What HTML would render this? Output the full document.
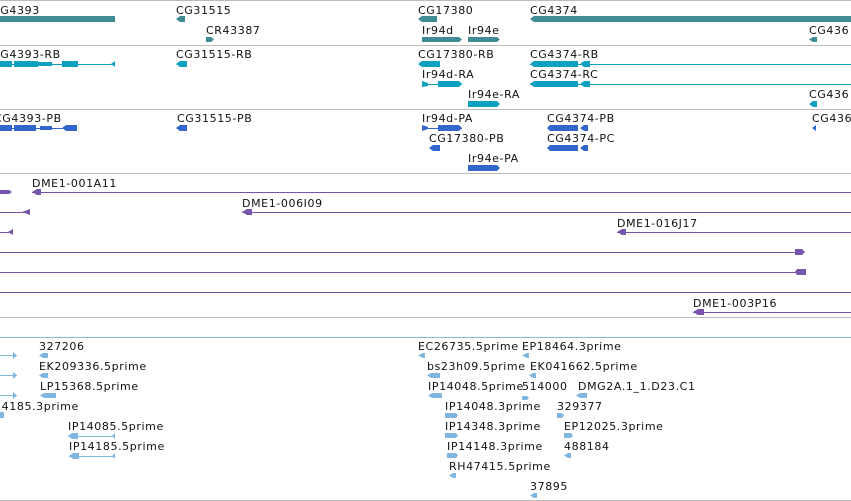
<!DOCTYPE html>
<html><head><meta charset="utf-8"><style>
html,body{margin:0;padding:0;background:#fff;width:851px;height:501px;overflow:hidden}
svg{display:block}
text{font-family:"DejaVu Sans","Liberation Sans",sans-serif;font-size:11px;letter-spacing:0.6px;fill:#111}
</style></head><body>
<svg width="851" height="501" viewBox="0 0 851 501" shape-rendering="crispEdges">
<g stroke="#bbb" stroke-width="1">
<line x1="0" y1="0.5" x2="851" y2="0.5"/>
<line x1="0" y1="45.5" x2="851" y2="45.5"/>
<line x1="0" y1="109.5" x2="851" y2="109.5"/>
<line x1="0" y1="173.5" x2="851" y2="173.5"/>
<line x1="0" y1="317.5" x2="851" y2="317.5"/>
<line x1="0" y1="500.5" x2="851" y2="500.5"/>
</g>
<line x1="0" y1="337.5" x2="851" y2="337.5" stroke="#88bbdd"/>

<g fill="#418c93" shape-rendering="auto">
<rect x="0" y="16" width="115" height="6"/>
<polygon points="176,19 180,16 185,16 185,22 180,22"/>
<polygon points="206,37 211,37 214,39.5 211,42 206,42"/>
<polygon points="418,19 422,16 437,16 437,22 422,22"/>
<polygon points="422,37 459,37 462,39.5 459,42 422,42"/>
<polygon points="468,37 497,37 500,39.5 497,42 468,42"/>
<polygon points="530,19 534,16 851,16 851,22 534,22"/>
<polygon points="809,39.5 813,37 817,37 817,42 813,42"/>
</g>
<text x="-8" y="14">CG4393</text>
<text x="176" y="14">CG31515</text>
<text x="206" y="34">CR43387</text>
<text x="418" y="14">CG17380</text>
<text x="422" y="34">Ir94d</text>
<text x="468" y="34">Ir94e</text>
<text x="530" y="14">CG4374</text>
<text x="809" y="34">CG436</text>

<g fill="#0fa0c0" shape-rendering="auto">
<rect x="0" y="64" width="115" height="1"/>
<rect x="0" y="61" width="12" height="6"/><rect x="14" y="61" width="24" height="6"/>
<rect x="38" y="62" width="14" height="4"/><rect x="62" y="61" width="16" height="6"/>
<polygon points="111,64 115,61 115,67"/>
<polygon points="176,64 180,61 187,61 187,67 180,67"/>
<polygon points="418,64 422,61 440,61 440,67 422,67"/>
<polygon points="530,64 534,61 578,61 578,67 534,67"/><polygon points="580,64 584,61 590,61 590,67 584,67"/>
<rect x="530" y="64" width="321" height="1"/>
<rect x="422" y="84" width="40" height="1"/>
<polygon points="422,81 428,83 428,86 422,87"/><polygon points="438,81 459,81 462,84 459,87 438,87"/>
<polygon points="530,84 534,81 578,81 578,87 534,87"/><polygon points="580,84 584,81 590,81 590,87 584,87"/>
<rect x="530" y="84" width="321" height="1"/>
<polygon points="468,101 497,101 500,104 497,107 468,107"/>
<polygon points="809,104 813,101 817,101 817,107 813,107"/>
</g>
<text x="-8" y="58">CG4393-RB</text>
<text x="176" y="58">CG31515-RB</text>
<text x="418" y="58">CG17380-RB</text>
<text x="530" y="58">CG4374-RB</text>
<text x="422" y="78">Ir94d-RA</text>
<text x="530" y="78">CG4374-RC</text>
<text x="468" y="98">Ir94e-RA</text>
<text x="809" y="98">CG436</text>

<g fill="#3366cc" shape-rendering="auto">
<rect x="0" y="128" width="77" height="1"/>
<rect x="0" y="125" width="12" height="6"/><rect x="14" y="125" width="22" height="6"/>
<rect x="40" y="126" width="12" height="4"/><polygon points="62,128 66,125 77,125 77,131 66,131"/>
<polygon points="176,128 180,125 187,125 187,131 180,131"/>
<rect x="422" y="128" width="40" height="1"/>
<polygon points="422,125 428,127 428,129 422,131"/><polygon points="438,125 459,125 462,128 459,131 438,131"/>
<polygon points="547,128 550,125 578,125 578,131 550,131"/><polygon points="580,128 584,125 588,125 588,131 584,131"/>
<polygon points="812,128 816,125 816,131"/>
<polygon points="429,148 433,145 440,145 440,151 433,151"/>
<polygon points="547,148 550,145 578,145 578,151 550,151"/><polygon points="580,148 584,145 588,145 588,151 584,151"/>
<polygon points="468,165 497,165 500,168 497,171 468,171"/>
</g>
<text x="-6" y="122">CG4393-PB</text>
<text x="177" y="122">CG31515-PB</text>
<text x="422" y="122">Ir94d-PA</text>
<text x="547" y="122">CG4374-PB</text>
<text x="812" y="122">CG436</text>
<text x="429" y="142">CG17380-PB</text>
<text x="547" y="142">CG4374-PC</text>
<text x="468" y="162">Ir94e-PA</text>

<g fill="#7755aa" shape-rendering="auto">
<polygon points="0,190 9,190 12,192 9,194 0,194"/>
<rect x="32" y="192" width="819" height="1"/><polygon points="32,192 37,189 41,189 41,195 37,195"/>
<rect x="0" y="212" width="30" height="1"/><polygon points="22,212 30,209 30,215"/>
<rect x="242" y="212" width="609" height="1"/><polygon points="242,212 247,209 252,209 252,215 247,215"/>
<rect x="0" y="232" width="13" height="1"/><polygon points="8,232 13,229 13,235"/>
<rect x="617" y="232" width="234" height="1"/><polygon points="617,232 622,229 626,229 626,235 622,235"/>
<rect x="0" y="252" width="800" height="1"/><polygon points="795,249 802,249 805,252 802,255 795,255"/>
<rect x="0" y="272" width="800" height="1"/><polygon points="797,269 806,269 806,275 797,275 795,272"/>
<rect x="0" y="292" width="851" height="1"/>
<rect x="693" y="312" width="158" height="1"/><polygon points="693,312 698,309 704,309 704,315 698,315"/>
</g>
<text x="32" y="187">DME1-001A11</text>
<text x="242" y="207">DME1-006I09</text>
<text x="617" y="227">DME1-016J17</text>
<text x="693" y="307">DME1-003P16</text>

<g fill="#7fb6e0" shape-rendering="auto">
<rect x="0" y="355" width="17" height="1"/><polygon points="13,352 17,355.5 13,359"/>
<rect x="0" y="375" width="17" height="1"/><polygon points="13,372 17,375.5 13,379"/>
<rect x="0" y="395" width="17" height="1"/><polygon points="13,392 17,395.5 13,399"/>
<polygon points="0,412 4,412 4,418 0,418"/>
<polygon points="39,355.5 43,353 48,353 48,358 43,358"/>
<polygon points="39,375.5 43,373 48,373 48,378 43,378"/>
<polygon points="40,395.5 44,393 56,393 56,398 44,398"/>
<rect x="68" y="436" width="47" height="1"/><polygon points="68,436 72,433 78,433 78,439 72,439"/><polygon points="115,433 115,439 112,436"/>
<rect x="69" y="456" width="46" height="1"/><polygon points="69,456 73,453 79,453 79,459 73,459"/><polygon points="115,453 115,459 112,456"/>
<polygon points="418,355.5 423,353 425,353 425,358 423,358"/>
<polygon points="522,355.5 527,353 529,353 529,358 527,358"/>
<polygon points="427,375.5 431,373 440,373 440,378 431,378"/>
<polygon points="529,375.5 533,373 536,373 536,378 533,378"/>
<polygon points="428,395.5 432,393 442,393 442,398 432,398"/>
<polygon points="522,396 527,396 529,398 527,400 522,400"/>
<polygon points="576,395.5 580,393 587,393 587,398 580,398"/>
<polygon points="445,413 456,413 458,415.5 456,418 445,418"/>
<polygon points="557,413 562,413 564,415.5 562,418 557,418"/>
<polygon points="445,433 456,433 458,435.5 456,438 445,438"/>
<polygon points="564,433 571,433 573,435.5 571,438 564,438"/>
<polygon points="447,453 456,453 458,455.5 456,458 447,458"/>
<polygon points="564,455.5 568,453 571,453 571,458 568,458"/>
<polygon points="449,475.5 453,473 456,473 456,478 453,478"/>
<polygon points="530,495.5 534,493 537,493 537,498 534,498"/>
</g>
<text x="39" y="350">327206</text>
<text x="39" y="370">EK209336.5prime</text>
<text x="40" y="390">LP15368.5prime</text>
<text x="-17" y="410">IP14185.3prime</text>
<text x="68" y="430">IP14085.5prime</text>
<text x="69" y="450">IP14185.5prime</text>
<text x="418" y="350">EC26735.5prime</text>
<text x="522" y="350">EP18464.3prime</text>
<text x="427" y="370">bs23h09.5prime</text>
<text x="530" y="370">EK041662.5prime</text>
<text x="428" y="390">IP14048.5prime</text>
<text x="522" y="390">514000</text>
<text x="578" y="390">DMG2A.1_1.D23.C1</text>
<text x="445" y="410">IP14048.3prime</text>
<text x="557" y="410">329377</text>
<text x="445" y="430">IP14348.3prime</text>
<text x="564" y="430">EP12025.3prime</text>
<text x="447" y="450">IP14148.3prime</text>
<text x="564" y="450">488184</text>
<text x="449" y="470">RH47415.5prime</text>
<text x="530" y="490">37895</text>
</svg>
</body></html>
